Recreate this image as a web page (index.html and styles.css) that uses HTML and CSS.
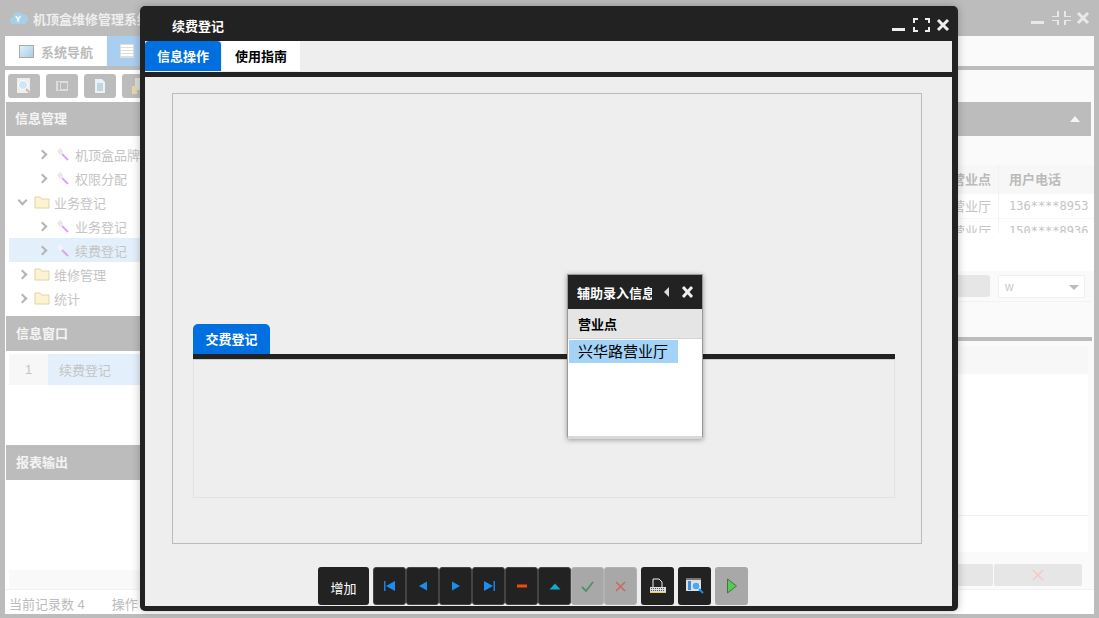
FILE: index.html
```html
<!DOCTYPE html>
<html lang="zh">
<head>
<meta charset="utf-8">
<title>机顶盒维修管理系统</title>
<link rel="stylesheet" href="styles.css">
</head>
<body>
<div class="app">
  <header class="app-title">
    <svg class="logo" width="18" height="14" viewBox="0 0 18 14"><path d="M4 13a3.600 3.600 0 0 1-.6-7.200A5 5 0 0 1 12.500 3.500 4.800 4.800 0 0 1 14 13z" fill="#a9cfe6"/><text x="5" y="11" class="logo-mark">Y</text></svg>
    <span class="app-name">机顶盒维修管理系统</span>
    <span class="spacer"></span>
    <svg class="win-icons" width="60" height="18" viewBox="0 0 60 18"><path d="M0 12h13v3H0z" fill="#e8e8e8"/><path d="M26 2v5h-5v1h7V2zM33 2v6h7V7h-5V2zM21 11v1h5v4h2v-5zM33 11v5h2v-4h5v-1z" fill="#e8e8e8"/><path d="M47 4l10 10M57 4L47 14" stroke="#e8e8e8" stroke-width="3"/></svg>
  </header>
  <div class="app-body">
    <nav class="page-tabs">
      <div class="page-tab"><span class="nav-glyph"></span>系统导航</div>
      <div class="page-tab current"><span class="grid-glyph"></span></div>
    </nav>
    <div class="rule"></div>
    <div class="columns">
      <aside class="left">
        <div class="toolbar">
          <button class="tool"><svg width="18" height="18" viewBox="0 0 18 18"><path d="M2 1h13v15H2z" fill="#eee"/><circle cx="8" cy="8" r="4.500" fill="#cfe6f5" stroke="#fff"/><path d="M11 12l4 4" stroke="#d8b8a0" stroke-width="2"/></svg></button>
          <button class="tool"><svg width="14" height="14" viewBox="0 0 14 14"><path d="M1 2h12v10H1z" fill="#ddd"/><path d="M4 3v8M6 5h6M6 7h6M6 9h6" stroke="#999"/></svg></button>
          <button class="tool"><svg width="14" height="16" viewBox="0 0 14 16"><path d="M2 1h7l3 3v11H2z" fill="#e8f2fa"/><path d="M4 6h6M4 8h6M4 10h6M4 12h6" stroke="#9bb"/></svg></button>
          <button class="tool"><svg width="16" height="18" viewBox="0 0 16 18"><path d="M5 1h10v12H5z" fill="#ddd"/><path d="M2 9h5v8H2z" fill="#e8d8a8"/></svg></button>
        </div>
        <div class="band">信息管理</div>
        <ul class="tree">
          <li class="node l2"><i class="chev"></i><svg class="leaf" width="15" height="15" viewBox="0 0 15 15"><path d="M2 4l4-3 2 4-3 3z" fill="#e8e8e8"/><path d="M7 7l6 6" stroke="#d9a8ea" stroke-width="2"/></svg>机顶盒品牌</li>
          <li class="node l2"><i class="chev"></i><svg class="leaf" width="15" height="15" viewBox="0 0 15 15"><path d="M2 4l4-3 2 4-3 3z" fill="#e8e8e8"/><path d="M7 7l6 6" stroke="#d9a8ea" stroke-width="2"/></svg>权限分配</li>
          <li class="node l1"><i class="chev down"></i><svg class="folder" width="16" height="14" viewBox="0 0 16 14"><path d="M1 2h5l1.500 2H15v9H1z" fill="#fbf3d2" stroke="#e3d3a2"/></svg>业务登记</li>
          <li class="node l2"><i class="chev"></i><svg class="leaf" width="15" height="15" viewBox="0 0 15 15"><path d="M2 4l4-3 2 4-3 3z" fill="#e8e8e8"/><path d="M7 7l6 6" stroke="#d9a8ea" stroke-width="2"/></svg>业务登记</li>
          <li class="node l2 selected"><i class="chev"></i><svg class="leaf" width="15" height="15" viewBox="0 0 15 15"><path d="M2 4l4-3 2 4-3 3z" fill="#f4f4f4"/><path d="M7 7l6 6" stroke="#d9a8ea" stroke-width="2"/></svg>续费登记</li>
          <li class="node l1"><i class="chev"></i><svg class="folder" width="16" height="14" viewBox="0 0 16 14"><path d="M1 2h5l1.500 2H15v9H1z" fill="#fbf3d2" stroke="#e3d3a2"/></svg>维修管理</li>
          <li class="node l1"><i class="chev"></i><svg class="folder" width="16" height="14" viewBox="0 0 16 14"><path d="M1 2h5l1.500 2H15v9H1z" fill="#fbf3d2" stroke="#e3d3a2"/></svg>统计</li>
        </ul>
        <div class="band band-window">信息窗口</div>
        <div class="win-row"><span class="win-no">1</span><span class="win-name">续费登记</span></div>
        <div class="band band-report">报表输出</div>
        <div class="report-body"></div>
        <div class="left-foot"></div>
      </aside>
      <section class="right">
        <div class="band band-right"><i class="caret-up"></i></div>
        <div class="table-gap"></div>
        <div class="table-head"><span class="col-a">营业点</span><span class="col-b">用户电话</span></div>
        <div class="table-row"><span class="col-a">兴华路营业厅</span><span class="col-b mono">136****8953</span></div>
        <div class="table-row clipped"><span class="col-a">兴华路营业厅</span><span class="col-b mono">150****8936</span></div>
        <div class="table-blank"></div>
        <div class="pager">
          <div class="pager-btn"></div>
          <div class="select">w<i class="sel-arrow"></i></div>
        </div>
        <div class="gap-soft"></div>
        <div class="rule rule-right"></div>
        <div class="detail">
          <div class="detail-head"></div>
          <div class="detail-main"></div>
          <div class="detail-line"></div>
        </div>
        <div class="actions">
          <div class="act"></div>
          <div class="act act-x"><svg width="12" height="12" viewBox="0 0 12 12"><path d="M1 1l10 10M11 1L1 11" stroke="#f5c9c4" stroke-width="1.500"/></svg></div>
        </div>
      </section>
    </div>
    <footer class="status"><span class="status-a">当前记录数 4</span><span>操作</span></footer>
  </div>
</div>

<div class="modal">
  <div class="modal-title">
    <span class="modal-name">续费登记</span>
    <svg width="58" height="18" viewBox="0 0 58 18"><path d="M0 12h13v3H0z" fill="#eee"/><path d="M22 7V3h4M33 3h4v4M37 11v4h-4M26 15h-4v-4" fill="none" stroke="#eee" stroke-width="2"/><path d="M46 4l10 10M56 4L46 14" stroke="#eee" stroke-width="3"/></svg>
  </div>
  <div class="modal-inner">
    <div class="modal-tabs">
      <div class="mtab active">信息操作</div>
      <div class="mtab">使用指南</div>
    </div>
    <div class="black-line"></div>
    <div class="modal-content">
      <div class="outer-box">
        <div class="inner-tab">交费登记</div>
        <div class="black-line thick"></div>
        <div class="inner-box"></div>
      </div>
      <div class="buttons">
        <button class="btn wide">增加</button>
        <div class="btn-group">
          <button class="btn nav"><svg width="14" height="12" viewBox="0 0 14 12"><path d="M1 1h1.500v10H1z" fill="#1a7fe8"/><path d="M3 6l9-5v10z" fill="#1a8df0"/></svg></button>
          <button class="btn nav"><svg width="10" height="10" viewBox="0 0 10 10"><path d="M1 5l8-4.500v9z" fill="#1a8df0"/></svg></button>
          <button class="btn nav"><svg width="10" height="10" viewBox="0 0 10 10"><path d="M9 5L1 .5v9z" fill="#1a8df0"/></svg></button>
          <button class="btn nav"><svg width="14" height="12" viewBox="0 0 14 12"><path d="M11.500 1H13v10h-1.500z" fill="#1a7fe8"/><path d="M11 6L2 1v10z" fill="#1a8df0"/></svg></button>
          <button class="btn nav"><svg width="12" height="4" viewBox="0 0 12 4"><path d="M1 .5h10v3H1z" fill="#ef4a10"/></svg></button>
          <button class="btn nav"><svg width="12" height="7" viewBox="0 0 12 7"><path d="M6 .5l5.500 6H.5z" fill="#12aacb"/></svg></button>
          <button class="btn nav off"><svg width="13" height="11" viewBox="0 0 13 11"><path d="M1 6l4 4 7-9" fill="none" stroke="#4f8f68" stroke-width="1.800"/></svg></button>
          <button class="btn nav off"><svg width="11" height="11" viewBox="0 0 11 11"><path d="M1 1l9 9M10 1l-9 9" stroke="#c96a60" stroke-width="1.600"/></svg></button>
        </div>
        <button class="btn nav solo"><svg width="18" height="16" viewBox="0 0 18 16"><path d="M4 1h6l3 3v6H4z" fill="#222" stroke="#eee"/><path d="M1 9h16v5H1z" fill="#ddd"/><path d="M2 10.500h14M2 12.500h14" stroke="#555" stroke-dasharray="1 1"/><path d="M1 14.500h16" stroke="#e8d060"/></svg></button>
        <button class="btn nav solo"><svg width="20" height="18" viewBox="0 0 20 18"><path d="M1 1h15v13H1z" fill="#ddd"/><path d="M1 1h15v2H1z" fill="#777"/><path d="M3 4h3v9H3z" fill="#3a8fe0"/><circle cx="11" cy="9" r="4" fill="#4aa8f0" stroke="#eee"/><path d="M14 12l4 4" stroke="#1a8df0" stroke-width="2"/></svg></button>
        <button class="btn nav solo off"><svg width="12" height="16" viewBox="0 0 12 16"><path d="M1.500 1l9 7-9 7z" fill="#58c858" stroke="#3b7a3b"/></svg></button>
      </div>
    </div>
  </div>

  <div class="popup">
    <div class="popup-title"><span class="popup-name">辅助录入信息</span><svg width="32" height="14" viewBox="0 0 32 14"><path d="M2 7l5-5v10z" fill="#ddd"/><path d="M21 2l9 10M30 2l-9 10" stroke="#eee" stroke-width="3"/></svg></div>
    <div class="popup-head">营业点</div>
    <div class="popup-list"><div class="popup-item">兴华路营业厅</div></div>
  </div>
</div>
</body>
</html>
```
FILE: styles.css
```css
* { box-sizing: border-box; }
html, body { margin: 0; height: 100%; overflow: hidden; }
body {
  background: #bcbcbc;
  font-family: "Liberation Sans", "Noto Sans CJK SC", sans-serif;
  font-size: 13px;
  color: #bbb;
}
ul { margin: 0; padding: 0; list-style: none; }
button { border: 0; padding: 0; font: inherit; }

.app { width: 1099px; height: 618px; display: flex; flex-direction: column; padding: 0 5px 4px 5px; }
.app-title { height: 36px; flex: none; display: flex; align-items: center; padding: 0 3px 0 5px; }
.logo-mark { font: bold 9px "Liberation Sans", sans-serif; fill: #fff; }
.app-name { margin-left: 5px; font-weight: 700; color: #eee; }
.spacer { flex: 1; }
.win-icons { display: block; }

.app-body { flex: 1; min-height: 0; background: #fff; display: flex; flex-direction: column; }
.page-tabs { height: 30px; flex: none; background: #fafafa; display: flex; }
.page-tab { width: 101px; display: flex; align-items: center; font-weight: 700; color: #bbb; background: #fff; padding-left: 14px; }
.page-tab.current { background: #a9cef0; padding-left: 13px; margin-left: 1px; }
.nav-glyph { width: 15px; height: 13px; margin-right: 7px; border: 1px solid #aaa; background: linear-gradient(135deg, #e0eff8, #a9cee6); }
.grid-glyph { width: 14px; height: 14px; background: repeating-linear-gradient(0deg, #ddd 0 1px, #fff 1px 3px), #fff; border: 1px solid #ddd; }
.rule { height: 4px; flex: none; background: #bcbcbc; }

.columns { flex: 1; min-height: 0; display: flex; }
.left { width: 205px; flex: none; display: flex; flex-direction: column; }
.toolbar { height: 32px; flex: none; padding: 4px 3px; display: flex; gap: 6px; background: #fff; }
.tool { width: 32px; height: 24px; background: #bcbcbc; border-radius: 3px; display: flex; align-items: center; justify-content: center; }
.band { height: 34px; flex: none; margin-left: 1px; background: #bcbcbc; color: #f4f4f4; font-weight: 700; line-height: 34px; padding-left: 9px; }
.tree { height: 180px; flex: none; padding-top: 6px; margin-left: 4px; background: #fff; }
.node { height: 24px; display: flex; align-items: center; color: #c4c4c4; }
.node.selected { background: #e3f0fb; }
.node.l1 { padding-left: 11px; }
.node.l2 { padding-left: 31px; }
.chev { width: 7px; height: 7px; margin-right: 7px; margin-left: -1px; border-top: 2px solid #b4b4b4; border-right: 2px solid #b4b4b4; transform: rotate(45deg); }
.chev.down { transform: rotate(135deg); margin-top: -3px; }
.leaf { margin-right: 5px; margin-left: 2px; }
.folder { margin-right: 4px; margin-left: 1px; }
.band-window { height: 35px; line-height: 35px; padding-left: 10px; }
.win-row { height: 31px; flex: none; margin: 3px 0 0 4px; display: flex; align-items: center; background: #e3f0fb; color: #c4c4c4; }
.win-no { width: 39px; height: 100%; background: #f7f7f7; display: flex; align-items: center; justify-content: center; }
.win-name { margin-left: 11px; }
.band-report { height: 35px; line-height: 35px; padding-left: 10px; margin-top: 60px; }
.report-body { height: 90px; flex: none; background: #fff; }
.left-foot { flex: 1; margin-left: 4px; background: #f9f9f9; }

.right { flex: 1; min-width: 0; display: flex; flex-direction: column; background: #fafafa; }
.band-right { margin: 32px 3px 0 0; position: relative; display: flex; align-items: center; justify-content: flex-end; padding-right: 11px; }
.caret-up { width: 0; height: 0; border-left: 5px solid transparent; border-right: 5px solid transparent; border-bottom: 6px solid #f4f4f4; }
.table-gap { height: 29px; flex: none; }
.table-head, .table-row { display: flex; justify-content: flex-end; flex: none; padding-right: 3px; }
.table-head { height: 29px; line-height: 29px; background: #f7f7f7; font-weight: 700; color: #bbb; }
.table-row { height: 25px; line-height: 25px; background: #fff; color: #c4c4c4; border-bottom: 1px solid #f7f7f7; }
.table-row.clipped { height: 14px; overflow: hidden; border: 0; }
.col-a { width: 120px; text-align: right; padding-right: 7px; white-space: nowrap; }
.col-b { width: 93px; padding-left: 10px; border-left: 1px solid #f1f1f1; white-space: nowrap; }
.mono { font-family: "DejaVu Sans Mono", "Liberation Mono", monospace; font-size: 12px; }
.table-blank { height: 38px; flex: none; background: #fff; }
.pager { height: 31px; flex: none; display: flex; align-items: center; justify-content: flex-end; gap: 8px; padding-right: 6px; border-bottom: 1px solid #f2f2f2; margin-right: 3px; }
.pager-btn { width: 100px; height: 22px; background: #e6e6e6; border-radius: 3px; }
.select { width: 87px; height: 23px; background: #fff; border: 1px solid #f0f0f0; border-radius: 2px; position: relative; padding-left: 6px; line-height: 22px; font-size: 12px; color: #c8c8c8; }
.sel-arrow { position: absolute; right: 5px; top: 9px; width: 0; height: 0; border-left: 5px solid transparent; border-right: 5px solid transparent; border-top: 5px solid #bbb; }
.gap-soft { height: 35px; flex: none; }
.rule-right { margin-right: 2px; }
.detail { height: 212px; flex: none; margin: 5px 6px 0 0; display: flex; flex-direction: column; }
.detail-head { height: 28px; background: #f7f7f7; }
.detail-main { height: 142px; background: #fff; border-bottom: 1px solid #f1f1f1; }
.detail-line { height: 36px; background: #fff; }
.actions { height: 33px; flex: none; display: flex; justify-content: flex-end; gap: 1px; padding: 7px 12px 4px 0; margin-top: -1px; }
.act { width: 100px; height: 22px; background: #e6e6e6; border-radius: 2px; display: flex; align-items: center; justify-content: center; }
.act-x { width: 88px; }

.status { height: 25px; flex: none; padding: 2px 0 0 4px; display: flex; align-items: center; gap: 27px; background: #fff; border-top: 1px solid #f2f2f2; font-size: 13px; color: #bbb; }

.modal { position: absolute; left: 140px; top: 6px; width: 818px; height: 605px; background: #222; border-radius: 5px; box-shadow: 0 0 8px rgba(0, 0, 0, .25); padding: 0 6px 5px 5px; display: flex; flex-direction: column; }
.modal-title { height: 35px; flex: none; display: flex; align-items: center; justify-content: space-between; padding: 3px 2px 0 27px; color: #fff; font-weight: 700; }
.modal-inner { flex: 1; min-height: 0; background: #eee; display: flex; flex-direction: column; }
.modal-tabs { height: 30px; flex: none; display: flex; gap: 1px; }
.mtab { width: 78px; background: #fff; color: #000; font-weight: 700; text-align: center; line-height: 32px; }
.mtab.active { width: 76px; background: #006fdf; color: #fff; border-radius: 4px 4px 0 0; }
.black-line { height: 5px; flex: none; background: #222; margin-top: 1px; }
.black-line.thick { margin-top: 0; }
.modal-content { flex: 1; min-height: 0; padding: 16px 30px 0 27px; }
.outer-box { height: 451px; border: 1px solid #bbb; padding: 230px 26px 0 20px; }
.inner-tab { width: 77px; height: 30px; background: #006fdf; color: #fff; font-weight: 700; text-align: center; line-height: 32px; border-radius: 5px 5px 0 0; }
.inner-box { height: 139px; border: 1px solid #e2e2e2; border-top: 1px solid #ccc; }
.buttons { margin-top: 23px; display: flex; gap: 4px; padding-left: 146px; }
.btn { height: 38px; background: #222; color: #fff; border-radius: 3px; display: flex; align-items: center; justify-content: center; }
.btn.wide { width: 51px; font-size: 13px; padding-top: 2px; }
.btn-group { display: flex; }
.btn.nav { width: 33px; border: 1px solid #444; }
.btn.solo { border: 0; }
.btn.off { background: #a8a8a8; border-color: #b2b2b2; }

.popup { position: absolute; left: 427px; top: 268px; width: 136px; height: 165px; background: #fff; border: 1px solid #999; box-shadow: 0 1px 5px rgba(0, 0, 0, .35); display: flex; flex-direction: column; border-bottom: 3px solid #d8d8d8; }
.popup-title { height: 34px; flex: none; background: #222; color: #fff; font-weight: 700; display: flex; align-items: center; padding: 0 8px 0 9px; justify-content: space-between; }
.popup-name { width: 75px; overflow: hidden; white-space: nowrap; }
.popup-head { height: 30px; flex: none; background: #e5e5e5; color: #000; font-weight: 700; line-height: 32px; padding-left: 10px; border-bottom: 1px solid #d4d4d4; }
.popup-list { flex: 1; padding: 1px 1px; }
.popup-item { width: 109px; height: 23px; background: #a3d3f6; color: #000; font-size: 15px; line-height: 23px; padding-left: 9px; white-space: nowrap; }
```
